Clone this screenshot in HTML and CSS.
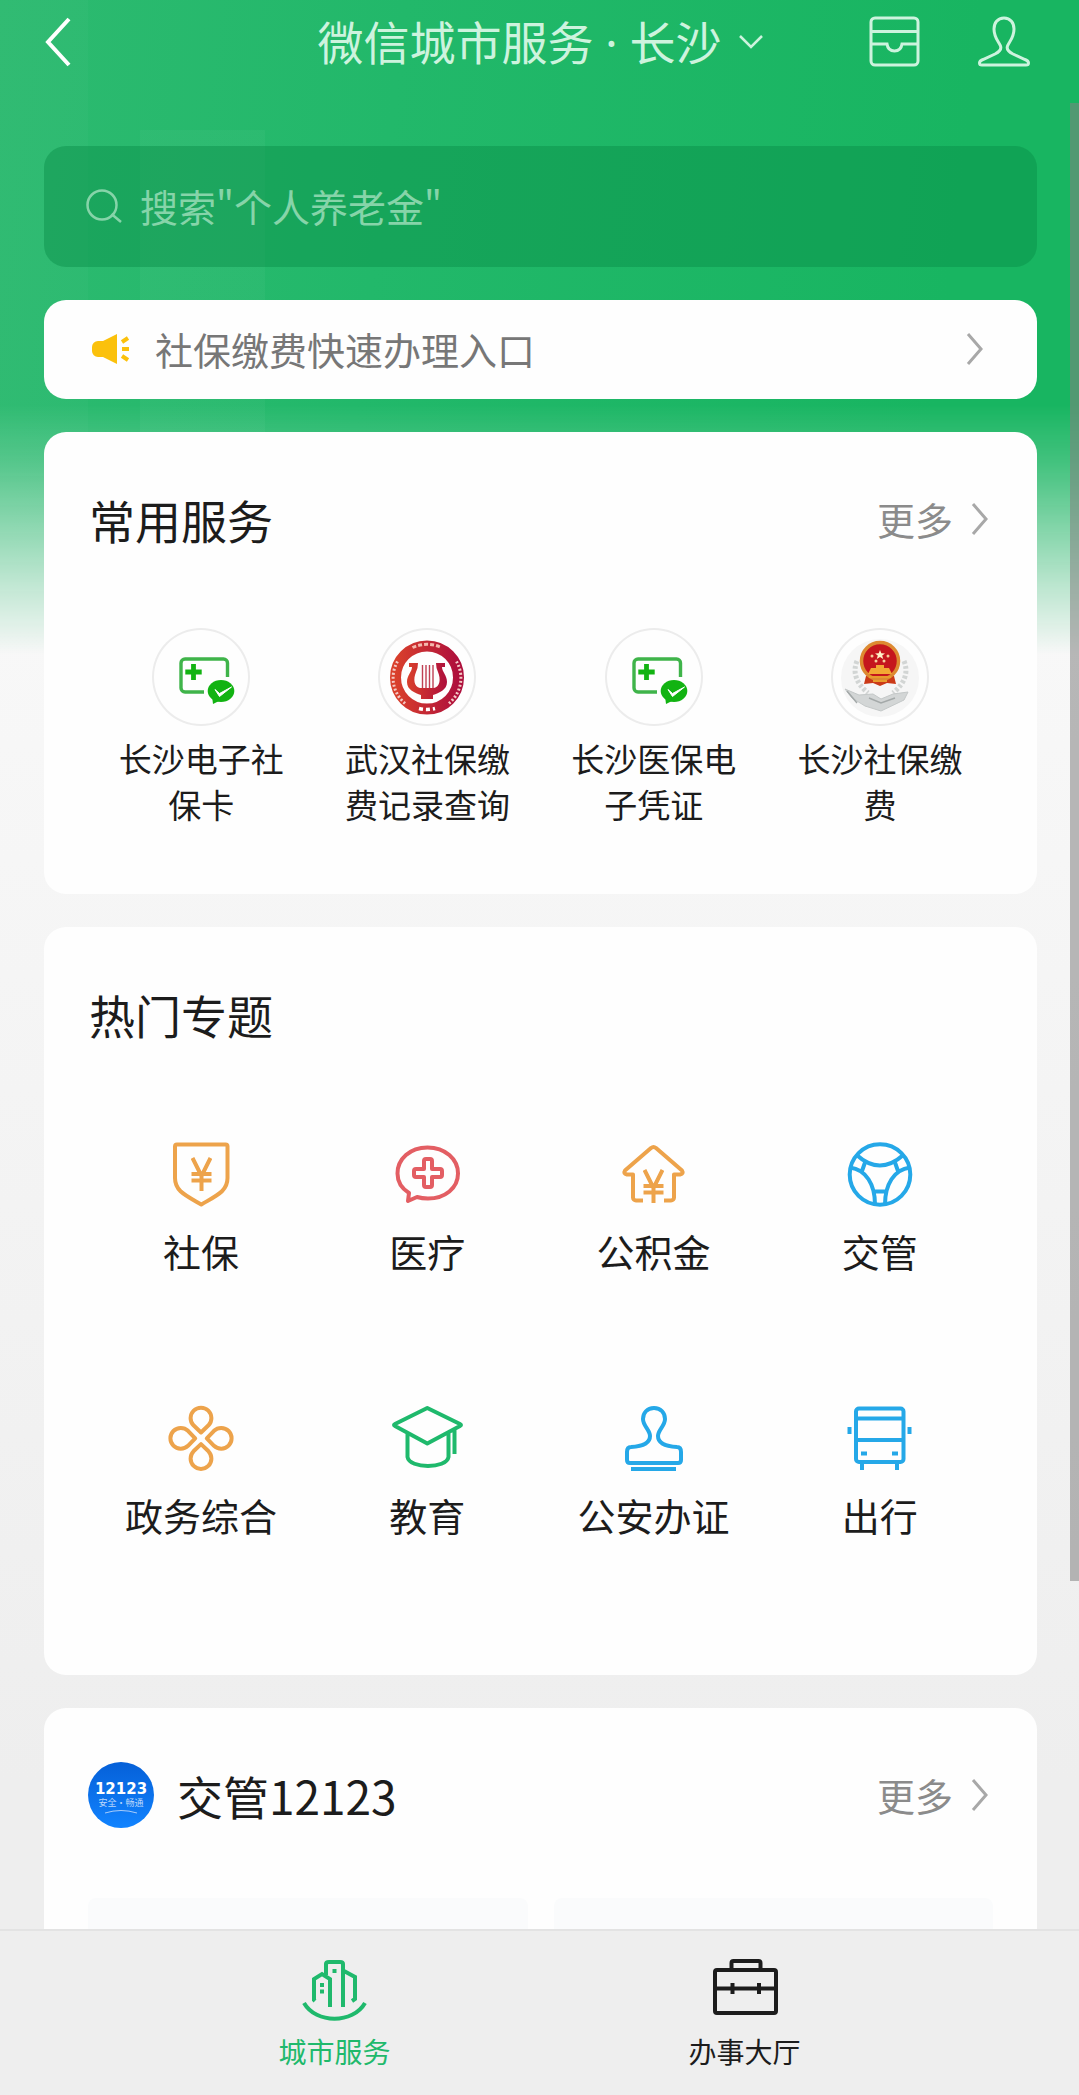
FILE: index.html
```html
<!DOCTYPE html>
<html lang="zh-CN">
<head>
<meta charset="utf-8">
<meta name="viewport" content="width=device-width, initial-scale=1">
<title>微信城市服务</title>
<link rel="stylesheet" href="styles.css">
</head>
<body>
<svg class="defs" width="0" height="0" aria-hidden="true">
  <defs>
    <linearGradient id="seal" x1="0" y1="0" x2="1" y2="0"><stop offset="0" stop-color="#d9402c"/><stop offset="1" stop-color="#ae0f3c"/></linearGradient>
    <symbol id="more" viewBox="0 0 18 34"><path d="M2 2l13 15L2 32" fill="none" stroke="#a8a8a8" stroke-width="3"/></symbol>
    <symbol id="insurance" viewBox="0 0 98 98">
      <path d="M75.500 49V35a4 4 0 0 0-4-4H33a4 4 0 0 0-4 4v25a4 4 0 0 0 4 4h19" fill="none" stroke="#3fb44a" stroke-width="3.400"/>
      <path d="M41.500 36v16M33.300 44h16.400" stroke="#12b312" stroke-width="4.800"/>
      <ellipse cx="69" cy="63" rx="13.300" ry="11" fill="#12b312"/>
      <path d="M60 68l1 8 8-4z" fill="#12b312"/>
      <path d="M63 61.500l4.500 4 12-6.500-12 9.500z" fill="#fff" stroke="#fff"/>
    </symbol>
    <symbol id="yen" viewBox="0 0 20 34"><path d="M1 1l9 18 9-18M10 18v16M0 17h20M0 23.500h20" fill="none" stroke="currentColor" stroke-width="4"/></symbol>
  </defs>
</svg>
<div class="app">
  <div class="page">
    <div class="backdrop" aria-hidden="true"></div>
    <div class="content">
      <header class="topbar">
        <button class="icon-button back" aria-label="返回"><svg width="28" height="50" viewBox="0 0 28 50"><path d="M25 2L4 25l21 23" fill="none" stroke="#fff" stroke-width="4"/></svg></button>
        <h1 class="title"><button class="city">微信城市服务 · 长沙<svg width="26" height="16" viewBox="0 0 26 16"><path d="M2 2l11 11L24 2" fill="none" stroke="currentColor" stroke-width="2.500"/></svg></button></h1>
        <div class="actions">
          <button class="icon-button" aria-label="消息"><svg width="56" height="56" viewBox="0 0 56 56" fill="none" stroke="currentColor" stroke-width="3"><rect x="4" y="4" width="47" height="47" rx="4"/><path d="M4 17.500h47M4 30h16q1 7 7.500 7t7.500-7h16"/></svg></button>
          <button class="icon-button" aria-label="我的"><svg width="56" height="56" viewBox="0 0 56 56" fill="none" stroke="currentColor" stroke-width="3"><path d="M28 4c-6.500 0-10 5-10 11 0 9 5 13 6.500 17s-1.500 6-5.500 8L7 45.500c-2.500 1-3.500 2-3.500 3.500S4 51 6 51h44c2 0 2.500-.500 2.500-2s-1-2.500-3.500-3.500L37 40c-4-2-7-4-5.500-8S38 24 38 15c0-6-3.500-11-10-11z"/></svg></button>
        </div>
      </header>

      <label class="search">
        <svg width="40" height="40" viewBox="0 0 40 40"><path d="M27.500 28L37 36" stroke="currentColor" stroke-width="2.500"/><circle cx="18" cy="19" r="14.500" fill="none" stroke="currentColor" stroke-width="2.500"/></svg>
        <input type="search" aria-label="搜索" placeholder='搜索"个人养老金"'>
      </label>

      <a class="card notice" href="#pay">
        <svg width="40" height="34" viewBox="0 0 40 34" fill="#fbc10c"><path d="M26 2v30L12 25H7a6 6 0 0 1-6-6v-4a6 6 0 0 1 6-6h5z"/><path d="M31 10l6-4M31 17h7M31 24l6 4" stroke="#fbc10c" stroke-width="4"/></svg>
        <span class="notice-text">社保缴费快速办理入口</span>
        <svg class="chevron" width="18" height="34"><use href="#more"/></svg>
      </a>

      <section class="card services">
        <div class="card-head"><h2>常用服务</h2><a class="more" href="#services">更多<svg width="18" height="34"><use href="#more"/></svg></a></div>
        <div class="grid service-grid">
          <a class="service" href="#s1"><span class="disc"><svg width="98" height="98"><use href="#insurance"/></svg></span><span class="service-name">长沙电子社保卡</span></a>
          <a class="service" href="#s2"><span class="disc"><svg width="98" height="98" viewBox="0 0 98 98">
            <circle cx="49" cy="49.500" r="31.500" fill="none" stroke="url(#seal)" stroke-width="11"/>
            <path d="M34.500 19.500a35 35 0 0 1 29 0" fill="none" stroke="#f3b9ae" stroke-width="3" stroke-dasharray="4 2"/>
            <path d="M41 80.500q8 2 16 0" fill="none" stroke="#fff" stroke-width="3.500" stroke-dasharray="4 3"/>
            <path d="M19.500 33.500a33 33 0 0 0 9 43M78.500 33.500a33 33 0 0 1-9 43" fill="none" stroke="#f4c9c4" stroke-width="3" stroke-dasharray="2 2"/>
            <path d="M31 35h9q0 5-2 9c-3 7-2 15 4 16h14c6-1 7-9 4-16q-2-4-2-9h9v4h-3c0 5 5 8 5 15 0 8-8 11-14 13v4H43v-4c-6-2-14-5-14-13 0-7 5-10 5-15h-3z" fill="url(#seal)"/>
            <path d="M44.500 37v23M48 37v23M51.500 37v23M55 37v23" stroke="#bf4054" stroke-width="1.400"/>
          </svg></span><span class="service-name">武汉社保缴费记录查询</span></a>
          <a class="service" href="#s3"><span class="disc"><svg width="98" height="98"><use href="#insurance"/></svg></span><span class="service-name">长沙医保电子凭证</span></a>
          <a class="service" href="#s4"><span class="disc"><svg width="98" height="98" viewBox="0 0 98 98">
            <circle cx="49" cy="50" r="39" fill="#f6f6f6"/>
            <path d="M26 33q-7 17 11 32M73 33q7 17-11 32" fill="none" stroke="#d2d5d4" stroke-width="5" stroke-dasharray="3 2"/>
            <path d="M14 61l14 6 14-1 8 5 12-5 15-2-4 8-23 11-16-5-13-8z" fill="#d3d6d6" stroke="#c4c8c8"/>
            <path d="M16 63l10 12M38 70l12 5 14-5" fill="none" stroke="#a4a9a9" stroke-width="1.500"/>
            <path d="M35 48l-2 8 9-1 7 3 7-3 9 1-2-8z" fill="#cb3a18"/>
            <circle cx="49" cy="33" r="18.500" fill="#c5161d" stroke="#dd8a31" stroke-width="3.500"/>
            <path d="M49 22l1.300 3.200 3.700.2-2.800 2.200 1 3.400-3.200-1.900-3.200 1.900 1-3.400-2.800-2.200 3.700-.2z" fill="#fff3c9"/>
            <g fill="#f5ce9a"><circle cx="41" cy="28" r="1.500"/><circle cx="57" cy="28" r="1.500"/><circle cx="45" cy="33" r="1.500"/><circle cx="53" cy="33" r="1.500"/></g>
            <path d="M45 37h8v3h5l3 6H37l3-6h5z" fill="#f3a833"/><path d="M38 49h22M42 53h14" stroke="#e99b2d" stroke-width="2"/>
          </svg></span><span class="service-name">长沙社保缴费</span></a>
        </div>
      </section>

      <section class="card topics">
        <div class="card-head"><h2>热门专题</h2></div>
        <div class="grid topic-grid">
          <a class="topic" href="#t1"><svg class="orange" width="72" height="72" viewBox="0 0 72 72"><path d="M12 6.500h48.500a2 2 0 0 1 2 2V40c0 13-10 17-26.200 26.500C20 57 10 53 10 40V8.500a2 2 0 0 1 2-2z"/><use href="#yen" x="26" y="19" width="21" height="34"/></svg>社保</a>
          <a class="topic" href="#t2"><svg class="red" width="72" height="72" viewBox="0 0 72 72"><path d="M17 63l1-8C10 50 6.500 43 6.500 35.500 6.500 21 19 9.500 36.500 9.500S67 21 67 35.500 54 60.500 37 60.500q-6 0-11-1.500z"/><path d="M35 21h4a2 2 0 0 1 2 2v8h8a2 2 0 0 1 2 2v4a2 2 0 0 1-2 2h-8v8a2 2 0 0 1-2 2h-4a2 2 0 0 1-2-2v-8h-8a2 2 0 0 1-2-2v-4a2 2 0 0 1 2-2h8v-8a2 2 0 0 1 2-2z"/></svg>医疗</a>
          <a class="topic" href="#t3"><svg class="orange" width="72" height="72" viewBox="0 0 72 72"><path d="M25 62.500h-7a3 3 0 0 1-3-3V36.500H9q-4-1-2-4L33 10q2.500-2 5 0l26 22.500q2 3-2 4h-6v23a3 3 0 0 1-3 3h-7"/><use href="#yen" x="25" y="31" width="21" height="34"/></svg>公积金</a>
          <a class="topic" href="#t4"><svg class="blue" width="72" height="72" viewBox="0 0 72 72"><circle cx="36" cy="36.500" r="30.300"/><path d="M12.700 17q23 21 46.600 0M6 29.500c16 2 25 17 25 37M66 29.500c-16 2-25 17-25 37M21 24.500L18 33M51 24.500l3 8.500M31 53.500h10"/></svg>交管</a>
          <a class="topic" href="#t5"><svg class="orange" width="72" height="72" viewBox="0 0 72 72"><path id="petal" d="M36 30.500l-7.500-7.200a10.400 10.400 0 1 1 15 0z"/><use href="#petal" transform="rotate(90 36 36.300)"/><use href="#petal" transform="rotate(180 36 36.300)"/><use href="#petal" transform="rotate(270 36 36.300)"/></svg>政务综合</a>
          <a class="topic" href="#t6"><svg class="green" width="72" height="72" viewBox="0 0 72 72"><path d="M36.300 6L69 22q2 1 0 2L36.300 41.500 4 24q-2-1 0-2zM16.500 31v24c2 12 39 12 41 0V31M63.500 27v25"/></svg>教育</a>
          <a class="topic" href="#t7"><svg class="blue" width="72" height="72" viewBox="0 0 72 72"><path d="M36 6c-7 0-11 5-11 11 0 7 7 11 7 17 0 8-9 10.500-19 11-3 0-4 2-4 5v8q0 3 3 3h48q3 0 3-3v-8c0-3-1-5-4-5-10-.500-19-3-19-11 0-6 7-10 7-17 0-6-4-11-11-11zM13 67h45"/></svg>公安办证</a>
          <a class="topic" href="#t8"><svg class="blue" width="72" height="72" viewBox="0 0 72 72"><rect x="12" y="6.500" width="47.500" height="53.500" rx="3"/><path d="M12 16.500h47M12 38h47M17 51.500h6M48 51.500h6M18 61v7M53 61v7M5.500 25v7M65.500 25v7"/></svg>出行</a>
        </div>
      </section>

      <section class="card traffic">
        <div class="card-head"><span class="badge" aria-hidden="true"><b>12123</b><small>安全·畅通</small><svg width="34" height="5" viewBox="0 0 34 5"><path d="M1 4q16-5 32 0" fill="none" stroke="#a9cdfb"/></svg></span><h2>交管12123</h2><a class="more" href="#traffic">更多<svg width="18" height="34"><use href="#more"/></svg></a></div>
        <div class="tiles"><div class="tile"></div><div class="tile"></div></div>
      </section>
    </div>
  </div>
  <div class="scroll-thumb" aria-hidden="true"></div>
  <nav class="tabs">
    <a class="tab active" href="#city"><svg width="72" height="72" viewBox="0 0 72 72"><path d="M17 47l-1-1V25l8-5 8 5v28M28 21V10q0-2 3-2h11q3 0 3 2v43M46 17l11 6v22l-3 2M6 49c12 21 49 21 61 0"/><path class="dots" d="M34.500 15h4v4h-4zM22 29h4v4h-4zM22 35.500h4v4h-4z"/></svg>城市服务</a>
    <a class="tab" href="#hall"><svg width="72" height="72" viewBox="0 0 72 72"><rect x="6" y="16" width="61" height="43" rx="2"/><path d="M22.500 16V9q0-2 2-2h25q2 0 2 2v7M6 34.500h61M23.500 29v11M50 29v11"/></svg>办事大厅</a>
  </nav>
</div>
</body>
</html>
```
FILE: styles.css
```css
* { box-sizing: border-box; }
body { margin: 0; font-family: "Noto Sans CJK SC", sans-serif; color: #1c1c1c; }
a { color: inherit; text-decoration: none; }
svg { display: block; flex: none; }
button { border: 0; padding: 0; background: none; color: inherit; font: inherit; cursor: pointer; }
h1, h2 { margin: 0; font-weight: 400; font-size: 46px; line-height: 60px; }
.defs { position: absolute; }

.app { position: relative; display: flex; flex-direction: column; height: 100vh; background: linear-gradient(#f8f8f8 30%, #eee 85%); }
.page { position: relative; flex: 1; min-height: 0; overflow-y: auto; scrollbar-width: none; }
.page::-webkit-scrollbar { display: none; }
.backdrop {
  position: absolute; inset: 0 0 auto; height: 655px;
  background:
    linear-gradient(90deg, rgba(255,255,255,.02) 88px, transparent 88px),
    linear-gradient(90deg, transparent 140px, rgba(255,255,255,.03) 140px 265px, transparent 265px) 0 130px no-repeat,
    linear-gradient(97deg, #2dba70, #22b86a 35%, #18b561 85%);
  -webkit-mask-image: linear-gradient(#000 405px, rgba(0,0,0,.8) 465px, rgba(0,0,0,.25) 590px, transparent);
  mask-image: linear-gradient(#000 405px, rgba(0,0,0,.8) 465px, rgba(0,0,0,.25) 590px, transparent);
}
.content { position: relative; display: flex; flex-direction: column; gap: 33px; padding: 0 42px 33px 44px; }

.topbar { display: grid; grid-template-columns: 1fr auto 1fr; align-items: center; height: 84px; margin-bottom: 29px; color: #cdf3de; }
.title { font-family: "Noto Sans", "Noto Sans CJK SC", sans-serif; }
.icon-button { width: 56px; }
.back { width: 28px; }
.city { display: flex; align-items: center; gap: 16px; }
.actions { display: flex; justify-content: flex-end; gap: 53px; padding-right: 5px; }

.search { display: flex; align-items: center; gap: 16px; height: 121px; padding: 0 40px 2px; border-radius: 22px; background: rgba(8,138,70,.42); color: #86d4a9; }
.search input { flex: 1; min-width: 0; border: 0; padding: 0; outline: 0; background: none; color: #fff; font: inherit; font-size: 38px; line-height: 50px; }
.search input::placeholder { color: #86d4a9; opacity: 1; }

.card { border-radius: 22px; background: #fefefe; }
.notice { display: flex; align-items: center; gap: 24px; height: 99px; padding: 0 53px 2px 47px; }
.notice-text { flex: 1; color: #777; font-size: 38px; line-height: 50px; }
.card-head { display: flex; align-items: center; height: 60px; padding: 0 4px 0 1px; }
.more { display: flex; align-items: center; gap: 18px; margin-left: auto; color: #8b8b8b; font-size: 38px; line-height: 50px; }
.services, .topics, .traffic { padding: 57px 44px 67px; }
.grid { display: grid; grid-template-columns: repeat(4, minmax(0, 1fr)); }

.service-grid { margin-top: 79px; }
.service { display: flex; flex-direction: column; align-items: center; gap: 9px; }
.disc { width: 98px; height: 98px; border-radius: 50%; box-shadow: inset 0 0 0 2px #ececec; }
.service-name { width: 168px; font-size: 33px; line-height: 46px; text-align: center; }

.topics { padding-bottom: 135px; }
.topic-grid { margin-top: 94px; row-gap: 126px; }
.topic { display: flex; flex-direction: column; align-items: center; gap: 16px; font-size: 38px; line-height: 50px; }
.topic svg { fill: none; stroke: currentColor; stroke-width: 4; stroke-linejoin: round; }
.orange { color: #eda34b; }
.red { color: #e35e63; }
.blue { color: #25a8e8; }
.green { color: #1fb96c; }

.badge { display: flex; flex-direction: column; align-items: center; width: 66px; height: 66px; margin: 0 23px 0 -1px; padding-top: 19px; border-radius: 50%; background: linear-gradient(#0560d8, #1183ff); color: #fff; }
.badge b { font: bold 15px/16px "DejaVu Sans", sans-serif; }
.badge small { font-size: 9px; line-height: 12px; color: #b9d6fb; }
.traffic { padding-bottom: 44px; }
.tiles { display: grid; grid-template-columns: 1fr 1fr; gap: 26px; margin-top: 73px; }
.tile { height: 160px; border-radius: 8px; background: #fafbfc; }

.scroll-thumb { position: absolute; top: 103px; right: 0; width: 9px; height: 1478px; max-height: 71%; background: rgba(130,130,130,.55); }

.tabs { display: flex; height: 166px; padding: 23px 12% 0; border-top: 2px solid #e3e3e3; background: #eee; }
.tab { display: flex; flex: 1; flex-direction: column; align-items: center; gap: 7px; font-size: 28px; line-height: 36px; }
.tab svg { fill: none; stroke: currentColor; stroke-width: 4; }
.tab .dots { fill: currentColor; stroke: none; }
.active { color: #1fb96c; }
```
